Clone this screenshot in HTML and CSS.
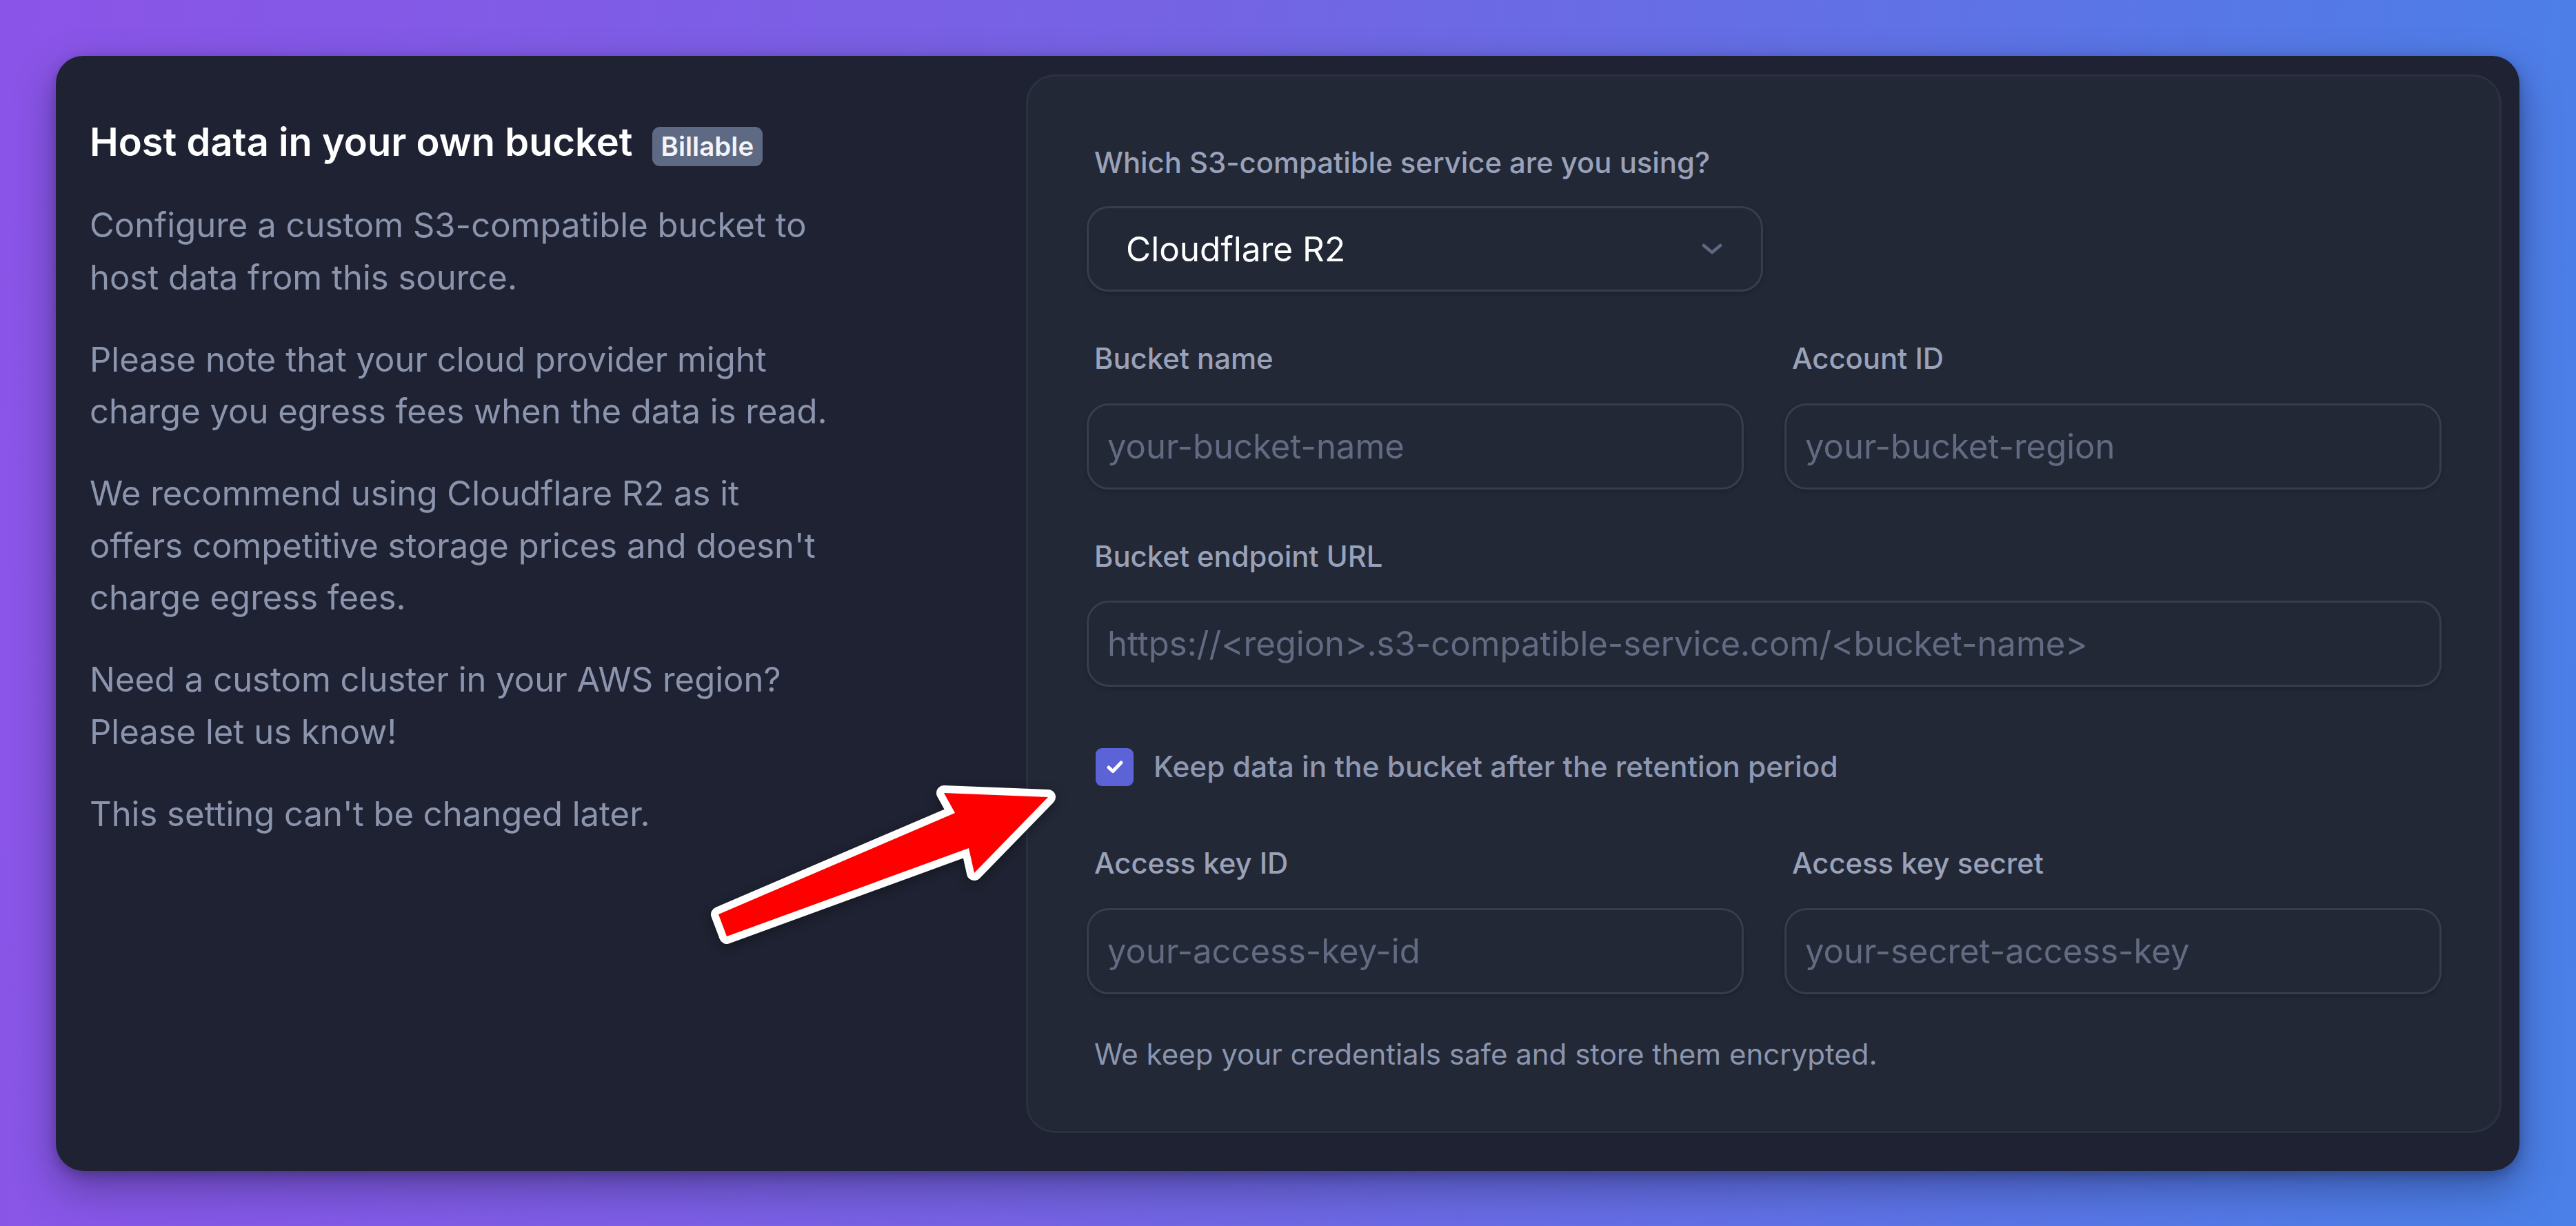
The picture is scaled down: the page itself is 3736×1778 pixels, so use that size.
FILE: index.html
```html
<!DOCTYPE html>
<html lang="en">
<head>
<meta charset="utf-8">
<title>Host data in your own bucket</title>
<link rel="stylesheet" href="styles.css">
</head>
<body>
  <main class="card">
    <section class="intro">
      <h2 class="title">Host data in your own bucket <span class="badge">Billable</span></h2>
      <p class="text">Configure a custom S3-compatible bucket to host data from this source.</p>
      <p class="text">Please note that your cloud provider might charge you egress fees when the data is read.</p>
      <p class="text">We recommend using Cloudflare R2 as it offers competitive storage prices and doesn't charge egress fees.</p>
      <p class="text">Need a custom cluster in your AWS region? Please let us know!</p>
      <p class="text">This setting can't be changed later.</p>
    </section>

    <form class="panel">
      <div class="field">
        <div class="label">Which S3-compatible service are you using?</div>
        <div class="select">
          <span class="select-value">Cloudflare R2</span>
          <svg class="chevron" width="30" height="16" viewBox="0 0 30 16" aria-hidden="true">
            <path d="M3 3 L15 13 L27 3" fill="none" stroke="#5f6982" stroke-width="4.5" stroke-linecap="round" stroke-linejoin="round"/>
          </svg>
        </div>
      </div>

      <div class="grid row-gap">
        <div class="field">
          <div class="label">Bucket name</div>
          <div class="input"><span class="placeholder">your-bucket-name</span></div>
        </div>
        <div class="field">
          <div class="label">Account ID</div>
          <div class="input"><span class="placeholder">your-bucket-region</span></div>
        </div>
      </div>

      <div class="field row-gap">
        <div class="label">Bucket endpoint URL</div>
        <div class="input"><span class="placeholder">https://&lt;region&gt;.s3-compatible-service.com/&lt;bucket-name&gt;</span></div>
      </div>

      <div class="check">
        <span class="box">
          <svg width="30" height="24" viewBox="0 0 30 24" aria-hidden="true">
            <path d="M6 13 L12 18.5 L24 6" fill="none" stroke="#ffffff" stroke-width="5" stroke-linecap="round" stroke-linejoin="round"/>
          </svg>
        </span>
        <span class="check-text">Keep data in the bucket after the retention period</span>
      </div>

      <div class="grid keys">
        <div class="field">
          <div class="label">Access key ID</div>
          <div class="input"><span class="placeholder">your-access-key-id</span></div>
        </div>
        <div class="field">
          <div class="label">Access key secret</div>
          <div class="input"><span class="placeholder">your-secret-access-key</span></div>
        </div>
      </div>

      <p class="help">We keep your credentials safe and store them encrypted.</p>
    </form>
  </main>

  <svg class="arrow" width="560" height="300" viewBox="1000 1100 560 300" aria-hidden="true">
    <path d="M1520 1156 L1369 1150 L1385 1179 L1042 1326 L1054 1358 L1405 1230 L1413 1266 Z"
      fill="#ff0000" stroke="#ffffff" stroke-width="22" stroke-linejoin="round" paint-order="stroke"/>
  </svg>
</body>
</html>
```

FILE: styles.css
```css
html, body {
  margin: 0;
  padding: 0;
}

body {
  position: relative;
  width: 3736px;
  height: 1778px;
  overflow: hidden;
  background: linear-gradient(95deg, #8b54e8 0%, #7464e4 45%, #4a80e8 100%);
  font-family: Inter, "Noto Sans", sans-serif;
}

.card {
  box-sizing: border-box;
  width: 3573px;
  margin: 81px 0 0 81px;
  display: flex;
  align-items: flex-start;
  padding: 27px 26px 55px 0;
  background: #1f2232;
  border-radius: 40px;
  box-shadow: 0 24px 60px rgba(10, 12, 30, 0.35), 0 6px 16px rgba(10, 12, 30, 0.25);
}

.intro {
  box-sizing: border-box;
  flex: 0 0 1407px;
  padding: 61px 0 0 49px;
}

.title {
  margin: 0 0 45px;
  display: flex;
  align-items: baseline;
  gap: 28px;
  font-size: 56px;
  line-height: 75px;
  font-weight: 600;
  color: #ffffff;
}

.badge {
  display: inline-block;
  padding: 10px 13px;
  font-size: 38.5px;
  line-height: 37px;
  font-weight: 600;
  color: #f2f4f8;
  background: #5e6a84;
  border-radius: 11px;
}

.text {
  width: 1078px;
  margin: 0;
  font-size: 49px;
  line-height: 75.5px;
  color: #8c95ae;
}

.text + .text {
  margin-top: 43.5px;
}

.panel {
  box-sizing: border-box;
  flex: 1;
  margin: 0;
  padding: 99px 84px 85px 85px;
  background: #222836;
  border: 3px solid #2b3141;
  border-radius: 42px;
}

.label {
  padding-left: 11px;
  font-size: 41.8px;
  line-height: 53.4px;
  font-weight: 500;
  color: #9aa2ba;
}

.select {
  box-sizing: border-box;
  width: 981px;
  height: 124px;
  margin-top: 36px;
  display: flex;
  align-items: center;
  justify-content: space-between;
  padding: 0 56px 0 54px;
  background: #222836;
  border: 3px solid #363d4f;
  border-radius: 32px;
  box-shadow: 0 3px 6px rgba(0, 0, 0, 0.18);
}

.select-value {
  font-size: 49.5px;
  color: #ffffff;
}

.chevron {
  display: block;
}

.grid {
  display: grid;
  grid-template-columns: 1fr 1fr;
  column-gap: 59px;
}

.row-gap {
  margin-top: 71px;
}

.input {
  box-sizing: border-box;
  height: 125px;
  margin-top: 37px;
  display: flex;
  align-items: center;
  padding: 0 27px;
  background: #222836;
  border: 3px solid #363d4f;
  border-radius: 32px;
  box-shadow: 0 3px 6px rgba(0, 0, 0, 0.18);
}

.placeholder {
  font-size: 49px;
  color: #626b82;
  white-space: nowrap;
}

.check {
  margin-top: 84px;
  height: 64px;
  display: flex;
  align-items: center;
  padding-left: 13px;
  gap: 29px;
}

.box {
  flex: 0 0 55px;
  width: 55px;
  height: 55px;
  display: flex;
  align-items: center;
  justify-content: center;
  background: #5b63d6;
  border-radius: 9px;
}

.box svg {
  display: block;
}

.check-text {
  font-size: 42.4px;
  line-height: 64px;
  font-weight: 500;
  color: #8f98b2;
}

.keys {
  margin-top: 82px;
}

.help {
  margin: 60px 0 0;
  padding-left: 11px;
  font-size: 42px;
  line-height: 53.4px;
  color: #8c95ae;
}

.arrow {
  position: absolute;
  left: 1000px;
  top: 1100px;
  overflow: visible;
  filter: drop-shadow(0 4px 8px rgba(0, 0, 0, 0.35));
}
```
